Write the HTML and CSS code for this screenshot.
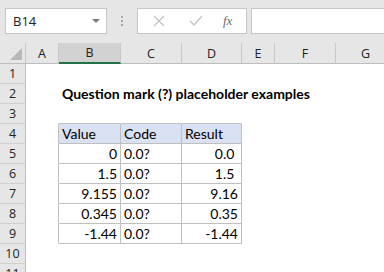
FILE: index.html
```html
<!DOCTYPE html>
<html lang="en">
<head>
    <meta charset="UTF-8">
    <title>Question mark placeholder examples</title>
    <link rel="stylesheet" href="styles.css">
</head>
<body>
    <div class="toolbar">
        <div class="namebox">
            <span>B14</span>
            <span class="arrow"></span>
        </div>
        <div class="grip"><i></i><i></i><i></i></div>
        <div class="fxbox">
            <svg class="ico-x" width="12" height="12" viewBox="0 0 12 12"><path d="M1 1L11 11M11 1L1 11" stroke="#c4c4c4" stroke-width="1.4" fill="none"/></svg>
            <svg class="ico-ok" width="14" height="12" viewBox="0 0 14 12"><path d="M1 6L5 10L13 1" stroke="#c4c4c4" stroke-width="1.4" fill="none"/></svg>
            <span class="fx">fx</span>
        </div>
        <div class="formula"></div>
    </div>

    <div class="sheet">
        <!-- column headers -->
        <div class="corner"><span class="tri"></span></div>
        <div class="colhdr">A</div>
        <div class="colhdr sel">B</div>
        <div class="colhdr">C</div>
        <div class="colhdr">D</div>
        <div class="colhdr">E</div>
        <div class="colhdr">F</div>
        <div class="colhdr">G</div>

        <!-- row 1 -->
        <div class="rowhdr">1</div>
        <div class="c"></div><div class="c"></div><div class="c"></div><div class="c"></div><div class="c"></div><div class="c"></div><div class="c"></div>

        <!-- row 2 -->
        <div class="rowhdr">2</div>
        <div class="c"></div>
        <div class="c title">Question mark (?) placeholder examples</div>
        <div class="c"></div><div class="c"></div><div class="c"></div><div class="c"></div><div class="c"></div>

        <!-- row 3 -->
        <div class="rowhdr">3</div>
        <div class="c"></div>
        <div class="c tb"></div><div class="c tb"></div><div class="c tb"></div>
        <div class="c"></div><div class="c"></div><div class="c"></div>

        <!-- row 4 -->
        <div class="rowhdr">4</div>
        <div class="c tl"></div>
        <div class="c t th">Value</div><div class="c t th">Code</div><div class="c t th">Result</div>
        <div class="c"></div><div class="c"></div><div class="c"></div>

        <!-- row 5 -->
        <div class="rowhdr">5</div>
        <div class="c tl"></div>
        <div class="c t num">0</div><div class="c t">0.0?</div><div class="c t num">0.0&nbsp;</div>
        <div class="c"></div><div class="c"></div><div class="c"></div>

        <!-- row 6 -->
        <div class="rowhdr">6</div>
        <div class="c tl"></div>
        <div class="c t num">1.5</div><div class="c t">0.0?</div><div class="c t num">1.5&nbsp;</div>
        <div class="c"></div><div class="c"></div><div class="c"></div>

        <!-- row 7 -->
        <div class="rowhdr">7</div>
        <div class="c tl"></div>
        <div class="c t num">9.155</div><div class="c t">0.0?</div><div class="c t num">9.16</div>
        <div class="c"></div><div class="c"></div><div class="c"></div>

        <!-- row 8 -->
        <div class="rowhdr">8</div>
        <div class="c tl"></div>
        <div class="c t num">0.345</div><div class="c t">0.0?</div><div class="c t num">0.35</div>
        <div class="c"></div><div class="c"></div><div class="c"></div>

        <!-- row 9 -->
        <div class="rowhdr">9</div>
        <div class="c tl"></div>
        <div class="c t num">-1.44</div><div class="c t">0.0?</div><div class="c t num">-1.44</div>
        <div class="c"></div><div class="c"></div><div class="c"></div>

        <!-- row 10 -->
        <div class="rowhdr">10</div>
        <div class="c"></div><div class="c"></div><div class="c"></div><div class="c"></div><div class="c"></div><div class="c"></div><div class="c"></div>

        <!-- row 11 -->
        <div class="rowhdr">11</div>
        <div class="c"></div><div class="c"></div><div class="c"></div><div class="c"></div><div class="c"></div><div class="c"></div><div class="c"></div>
    </div>
</body>
</html>
```

FILE: styles.css
```css
body {
    margin: 0;
    padding: 0;
    width: 384px;
    height: 272px;
    overflow: hidden;
    background-color: #fff;
    font-family: Lato, "Open Sans", sans-serif;
    color: #000;
}
.toolbar {
    height: 43px;
    background-color: #e6e6e6;
    display: flex;
    align-items: flex-start;
    padding: 8px 0 0 5px;
    box-sizing: border-box;
}
.namebox {
    width: 102px;
    height: 26px;
    box-sizing: border-box;
    background-color: #fff;
    border: 1px solid #c6c6c6;
    display: flex;
    align-items: center;
    justify-content: space-between;
    padding: 0 6px 0 7px;
    font-family: "Open Sans", sans-serif;
    font-size: 13px;
    color: #222;
}
.arrow {
    width: 0;
    height: 0;
    border-left: 4px solid transparent;
    border-right: 4px solid transparent;
    border-top: 4px solid #7a7a7a;
}
.grip {
    width: 30px;
    height: 26px;
    display: flex;
    flex-direction: column;
    align-items: center;
    justify-content: center;
    gap: 2px;
}
.grip i {
    display: block;
    width: 2px;
    height: 2px;
    background-color: #a6a6a6;
}
.fxbox {
    width: 110px;
    height: 26px;
    box-sizing: border-box;
    background-color: #fff;
    border: 1px solid #c6c6c6;
    display: flex;
    align-items: center;
}
.ico-x {
    margin-left: 15px;
}
.ico-ok {
    margin-left: 24px;
}
.fx {
    margin-left: 20px;
    font-family: "Liberation Serif", serif;
    font-style: italic;
    font-size: 13px;
    color: #6b6b6b;
}
.formula {
    flex: 1;
    height: 26px;
    box-sizing: border-box;
    margin-left: 4px;
    background-color: #fff;
    border: 1px solid #c6c6c6;
    border-right: none;
}
.sheet {
    display: grid;
    grid-template-columns: 26px 33px 62px 61px 60px 33px 61px 60px;
    grid-template-rows: 21px;
    grid-auto-rows: 20px;
    font-size: 14px;
}
.corner,
.colhdr {
    background-color: #e6e6e6;
    border-right: 1px solid #c8c8c8;
    border-bottom: 1px solid #bdbdbd;
    box-sizing: border-box;
    position: relative;
}
.colhdr {
    display: flex;
    align-items: center;
    justify-content: center;
    font-family: "Open Sans", sans-serif;
    font-size: 12.5px;
    color: #222;
}
.colhdr.sel {
    background-color: #d2d2d2;
    border-bottom: 2px solid #217346;
}
.tri {
    position: absolute;
    right: 3px;
    bottom: 3px;
    width: 0;
    height: 0;
    border-left: 12px solid transparent;
    border-bottom: 12px solid #b8b8b8;
}
.rowhdr {
    background-color: #e6e6e6;
    border-right: 1px solid #bdbdbd;
    border-bottom: 1px solid #d0d0d0;
    box-sizing: border-box;
    display: flex;
    align-items: center;
    justify-content: center;
    font-family: "Open Sans", sans-serif;
    font-size: 12.5px;
    color: #222;
}
.c {
    border-right: 1px solid #fff;
    border-bottom: 1px solid #fff;
    box-sizing: border-box;
    display: flex;
    align-items: center;
    padding: 0 3px;
    white-space: nowrap;
}
.title {
    font-weight: bold;
    position: relative;
    z-index: 1;
}
.tb {
    border-bottom-color: #bfbfbf;
}
.tl {
    border-right-color: #bfbfbf;
}
.t {
    border-right-color: #bfbfbf;
    border-bottom-color: #bfbfbf;
}
.th {
    background-color: #d9e1f2;
}
.num {
    justify-content: flex-end;
}
```
